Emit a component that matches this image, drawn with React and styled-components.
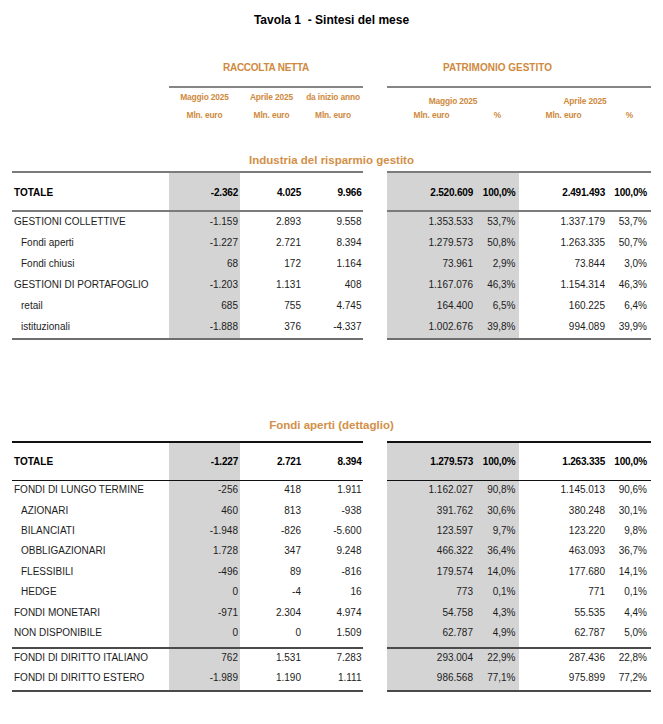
import React from 'react';
import styled, { createGlobalStyle } from 'styled-components';

const GlobalStyle = createGlobalStyle`
  html, body {
    margin: 0;
    padding: 0;
    background: #fff;
  }
  body {
    font-family: "Liberation Sans", Arial, sans-serif;
    color: #141414;
  }
`;

const COLS = '157px 71px 63px 60px 24px 89px 43px 89px 43px';
const ORANGE = '#cf8a3e';
const SHADE = '#d4d4d4';

// right padding + shading of each value column (after the label)
const VALUE_COLS = [
  { pr: 2, shade: true },
  { pr: 2 },
  { pr: 1.5 },
  { pr: 3, shade: true },
  { pr: 3.5, shade: true },
  { pr: 3 },
  { pr: 4 },
];

const industry = {
  total: ['-2.362', '4.025', '9.966', '2.520.609', '100,0%', '2.491.493', '100,0%'],
  rows: [
    { label: 'GESTIONI COLLETTIVE', v: ['-1.159', '2.893', '9.558', '1.353.533', '53,7%', '1.337.179', '53,7%'] },
    { label: 'Fondi aperti', indent: true, v: ['-1.227', '2.721', '8.394', '1.279.573', '50,8%', '1.263.335', '50,7%'] },
    { label: 'Fondi chiusi', indent: true, v: ['68', '172', '1.164', '73.961', '2,9%', '73.844', '3,0%'] },
    { label: 'GESTIONI DI PORTAFOGLIO', v: ['-1.203', '1.131', '408', '1.167.076', '46,3%', '1.154.314', '46,3%'] },
    { label: 'retail', indent: true, v: ['685', '755', '4.745', '164.400', '6,5%', '160.225', '6,4%'] },
    { label: 'istituzionali', indent: true, v: ['-1.888', '376', '-4.337', '1.002.676', '39,8%', '994.089', '39,9%'] },
  ],
};

const funds = {
  total: ['-1.227', '2.721', '8.394', '1.279.573', '100,0%', '1.263.335', '100,0%'],
  rows: [
    { label: 'FONDI DI LUNGO TERMINE', v: ['-256', '418', '1.911', '1.162.027', '90,8%', '1.145.013', '90,6%'] },
    { label: 'AZIONARI', indent: true, v: ['460', '813', '-938', '391.762', '30,6%', '380.248', '30,1%'] },
    { label: 'BILANCIATI', indent: true, v: ['-1.948', '-826', '-5.600', '123.597', '9,7%', '123.220', '9,8%'] },
    { label: 'OBBLIGAZIONARI', indent: true, v: ['1.728', '347', '9.248', '466.322', '36,4%', '463.093', '36,7%'] },
    { label: 'FLESSIBILI', indent: true, v: ['-496', '89', '-816', '179.574', '14,0%', '177.680', '14,1%'] },
    { label: 'HEDGE', indent: true, v: ['0', '-4', '16', '773', '0,1%', '771', '0,1%'] },
    { label: 'FONDI MONETARI', v: ['-971', '2.304', '4.974', '54.758', '4,3%', '55.535', '4,4%'] },
    { label: 'NON DISPONIBILE', v: ['0', '0', '1.509', '62.787', '4,9%', '62.787', '5,0%'] },
  ],
  split: [
    { label: 'FONDI DI DIRITTO ITALIANO', v: ['762', '1.531', '7.283', '293.004', '22,9%', '287.436', '22,8%'] },
    { label: 'FONDI DI DIRITTO ESTERO', v: ['-1.989', '1.190', '1.111', '986.568', '77,1%', '975.899', '77,2%'] },
  ],
};

const Page = styled.div`
  width: 663px;
  box-sizing: border-box;
  padding: 12px 0 30px 12px;
`;

const Title = styled.h1`
  margin: 0;
  width: 639px;
  text-align: center;
  font-size: 12px;
  font-weight: bold;
  line-height: 16px;
  color: #000;
  white-space: pre;
`;

const Grid = styled.div`
  display: grid;
  grid-template-columns: ${COLS};
`;

const CaptionRow = styled(Grid)`
  margin-top: 33px;
  padding-bottom: 11px;
`;

const Caption = styled.div`
  grid-column: ${(p) => p.$cols};
  text-align: center;
  color: ${ORANGE};
  font-size: 10px;
  font-weight: bold;
  line-height: 14px;
  letter-spacing: ${(p) => (p.$tight ? '-0.25px' : '0')};
`;

const Rule = styled(Grid)`
  height: ${(p) => p.$w}px;
`;

const RuleSeg = styled.div`
  grid-column: ${(p) => p.$cols};
  background: ${(p) => p.$color};
`;

const SubRow = styled(Grid)`
  grid-auto-rows: 18px;
`;

const SubHead = styled.div`
  grid-column: ${(p) => p.$cols || 'auto'};
  align-self: ${(p) => (p.$low ? 'end' : 'stretch')};
  text-align: center;
  color: ${ORANGE};
  font-size: 8.4px;
  font-weight: bold;
  line-height: ${(p) => (p.$low ? '10px' : '18px')};
  letter-spacing: -0.15px;
`;

const Section = styled.h2`
  margin: ${(p) => p.$mt}px 0 ${(p) => p.$mb}px;
  width: 639px;
  text-align: center;
  color: #d38f47;
  font-size: 11.5px;
  font-weight: bold;
  line-height: 16px;
`;

const Row = styled(Grid)`
  height: ${(p) => p.$h}px;
  font-size: 10px;
  font-weight: ${(p) => (p.$bold ? 'bold' : 'normal')};
  color: ${(p) => (p.$bold ? '#000' : '#1c1c1c')};
`;

const Label = styled.div`
  padding: ${(p) => p.$pt}px 0 0 ${(p) => (p.$indent ? 9 : 2)}px;
  line-height: 12px;
  white-space: nowrap;
`;

const Num = styled.div`
  padding: ${(p) => p.$pt}px ${(p) => p.$pr}px 0 0;
  line-height: 12px;
  text-align: right;
  white-space: nowrap;
  background: ${(p) => (p.$shade ? SHADE : 'transparent')};
  letter-spacing: ${(p) => (p.$bold ? '-0.2px' : '0')};
`;

const Gap = styled.div``;

const TableRule = ({ w, color }) => (
  <Rule $w={w}>
    <RuleSeg $cols="1 / 5" $color={color} />
    <RuleSeg $cols="6 / 10" $color={color} />
  </Rule>
);

const DataRow = ({ label, indent, v, h, pt, bold }) => (
  <Row $h={h} $bold={bold}>
    <Label $pt={pt} $indent={indent}>{label}</Label>
    {v.map((val, i) => (
      <React.Fragment key={i}>
        {i === 3 && <Gap />}
        <Num $pt={pt} $pr={VALUE_COLS[i].pr} $shade={VALUE_COLS[i].shade} $bold={bold}>
          {val}
        </Num>
      </React.Fragment>
    ))}
  </Row>
);

const App = () => (
  <Page>
    <GlobalStyle />
    <Title>{'Tavola 1  - Sintesi del mese'}</Title>

    <CaptionRow>
      <Caption $cols="2 / 5" $tight>RACCOLTA NETTA</Caption>
      <Caption $cols="6 / 9">PATRIMONIO GESTITO</Caption>
    </CaptionRow>
    <Rule $w={2}>
      <RuleSeg $cols="2 / 5" $color="#858585" />
      <RuleSeg $cols="6 / 10" $color="#858585" />
    </Rule>
    <SubRow>
      <Gap />
      <SubHead>Maggio 2025</SubHead>
      <SubHead>Aprile 2025</SubHead>
      <SubHead>da inizio anno</SubHead>
      <Gap />
      <SubHead $cols="span 2" $low>Maggio 2025</SubHead>
      <SubHead $cols="span 2" $low>Aprile 2025</SubHead>
      <Gap />
      <SubHead>Mln. euro</SubHead>
      <SubHead>Mln. euro</SubHead>
      <SubHead>Mln. euro</SubHead>
      <Gap />
      <SubHead>Mln. euro</SubHead>
      <SubHead>%</SubHead>
      <SubHead>Mln. euro</SubHead>
      <SubHead>%</SubHead>
    </SubRow>

    <Section $mt={28} $mb={3}>Industria del risparmio gestito</Section>
    <TableRule w={2} color="#7b7b7b" />
    <DataRow label="TOTALE" v={industry.total} h={37} pt={13.5} bold />
    <TableRule w={2} color="#7b7b7b" />
    {industry.rows.map((r) => (
      <DataRow key={r.label} {...r} h={21} pt={4} />
    ))}
    <TableRule w={2} color="#6e6e6e" />

    <Section $mt={77} $mb={8}>Fondi aperti (dettaglio)</Section>
    <TableRule w={2} color="#111" />
    <DataRow label="TOTALE" v={funds.total} h={37} pt={13} bold />
    <TableRule w={1} color="#111" />
    {funds.rows.map((r, i) => (
      <DataRow key={r.label} {...r} h={i === funds.rows.length - 1 ? 23.4 : 20.4} pt={3.2} />
    ))}
    <TableRule w={2} color="#4a4a4a" />
    {funds.split.map((r) => (
      <DataRow key={r.label} {...r} h={20.4} pt={2.8} />
    ))}
    <TableRule w={2} color="#4a4a4a" />
  </Page>
);

export default App;
